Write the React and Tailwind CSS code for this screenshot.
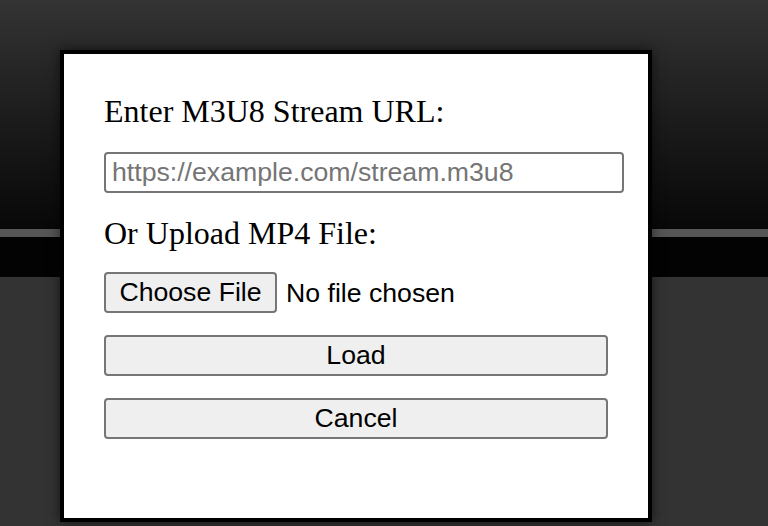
import React from 'react';

const sans = "font-['Liberation_Sans',Arial,sans-serif]";
const serif = "font-['Liberation_Serif','Times_New_Roman',serif]";

const Button = ({ children, className = '' }) => (
  <button
    type="button"
    className={`h-[41px] rounded-[4px] border-2 border-[#767676] bg-[#efefef] text-[26.67px] leading-none text-black ${sans} ${className}`}
  >
    {children}
  </button>
);

export default function App() {
  return (
    <div className="relative h-[526px] w-[768px] overflow-hidden bg-[#333333]">
      {/* player behind the dialog */}
      <div className="flex flex-col">
        <div className="h-[229px] bg-gradient-to-b from-[#343434] to-[#080808]" />
        <div className="h-[8px] bg-[#565656]" />
        <div className="h-[40px] bg-[#030303]" />
      </div>

      {/* Load dialog */}
      <div className="absolute left-[60px] top-[50px] flex h-[472px] w-[592px] flex-col border-4 border-black bg-white px-[40px] pt-[39px] shadow-[0_0_12px_rgba(0,0,0,0.6)]">
        <label className={`mb-[22px] text-[32px] leading-[37px] text-black ${serif}`}>
          Enter M3U8 Stream URL:
        </label>
        <input
          type="text"
          placeholder="https://example.com/stream.m3u8"
          className={`h-[41px] w-[520px] shrink-0 rounded-[4px] border-2 border-[#767676] px-[6px] text-[26.67px] text-black outline-none placeholder:text-[#757575] ${sans}`}
        />
        <label className={`mb-[20px] mt-[22px] text-[32px] leading-[37px] text-black ${serif}`}>
          Or Upload MP4 File:
        </label>
        <div className="flex items-center">
          <Button className="w-[173px]">Choose File</Button>
          <span className={`ml-[9px] text-[26.67px] text-black ${sans}`}>No file chosen</span>
        </div>
        <Button className="mt-[22px] w-full">Load</Button>
        <Button className="mt-[22px] w-full">Cancel</Button>
      </div>
    </div>
  );
}
